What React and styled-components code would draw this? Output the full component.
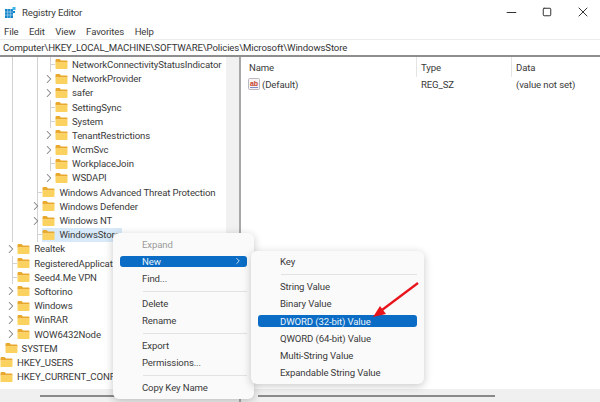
import React from 'react';
import styled, { createGlobalStyle } from 'styled-components';
import { ChevronRight, Minus, Square, X } from 'lucide-react';

const GlobalStyle = createGlobalStyle`
  html, body {
    margin: 0;
    padding: 0;
    background: #fff;
  }
  body {
    font-family: Roboto, "Noto Sans", sans-serif;
    font-size: 9.6px;
    letter-spacing: -0.12px;
    color: #3a3a3a;
  }
`;

const Window = styled.div`
  position: relative;
  width: 600px;
  height: 402px;
  overflow: hidden;
  display: flex;
  flex-direction: column;
  background: #fff;
`;

const TitleBar = styled.div`
  height: 24px;
  display: flex;
  align-items: center;
  padding-left: 5px;
  flex: none;
`;

const Title = styled.span`
  margin-left: 6px;
  flex: 1;
`;

const WinControl = styled.div`
  width: 36px;
  display: flex;
  justify-content: center;
  color: #333;
  margin-right: ${p => (p.$last ? -1 : 0)}px;
`;

const MenuBar = styled.div`
  height: 15px;
  display: flex;
  align-items: center;
  padding-left: 4px;
  gap: 10.5px;
  flex: none;
`;

const AddressBar = styled.div`
  height: 18px;
  flex: none;
  line-height: 16px;
  padding-left: 3px;
  border-top: 1px solid #ececec;
  border-bottom: 2px solid #8e8e8e;
  box-sizing: border-box;
  color: #333;
  white-space: nowrap;
`;

const Panes = styled.div`
  flex: 1;
  display: flex;
  min-height: 0;
`;

const TreePane = styled.div`
  width: 241px;
  flex: none;
  display: flex;
  flex-direction: column;
  border-right: 2px solid #a8a8a8;
  box-sizing: border-box;
  overflow: hidden;
`;

const TreeBody = styled.div`
  flex: 1;
  display: flex;
  min-height: 0;
`;

const TreeList = styled.div`
  flex: 1;
  min-width: 0;
  overflow: hidden;
  padding-top: 0.4px;
`;

// tree lines are painted as background layers: one per spine, plus the stub
const lineLayers = (guides, stub) => {
  const layers = guides.map(x => ({ pos: `${x}px 0`, size: '1px 100%' }));
  if (stub !== undefined) layers.push({ pos: `${stub}px 50%`, size: '5px 1px' });
  return layers;
};

const Row = styled.div`
  height: 14.2px;
  display: flex;
  align-items: center;
  white-space: nowrap;
  padding-left: ${p => p.$level * 12.6 - 8}px;
  background-repeat: no-repeat;
  background-image: ${p =>
    p.$lines.map(() => 'linear-gradient(#d2d2d2, #d2d2d2)').join(', ') || 'none'};
  background-size: ${p => p.$lines.map(l => l.size).join(', ') || 'auto'};
  background-position: ${p => p.$lines.map(l => l.pos).join(', ') || '0 0'};
`;

const Twist = styled.span`
  width: 0;
  display: flex;
  justify-content: flex-end;
  color: #808080;
  transform: translateX(1px);

  svg {
    flex: none;
  }
`;

const Node = styled.div`
  display: flex;
  align-items: center;
  height: 100%;
  padding-right: 2px;
  background: ${p => (p.$selected ? '#d8eaf9' : 'transparent')};
`;

const FolderSvg = styled.svg`
  width: 13px;
  height: 12px;
  flex: none;
`;

const Label = styled.span`
  margin-left: 4px;
`;

const TreeScroll = styled.div`
  width: 13px;
  flex: none;
  background: #f1f1f1;
`;

const HScroll = styled.div`
  height: 13px;
  flex: none;
  background: #f0f0f0;
  display: flex;
  align-items: center;
  padding-left: ${p => p.$from}px;
  padding-right: ${p => p.$to}px;
`;

const HThumb = styled.div`
  flex: 1;
  height: 2px;
  background: #8a8a8a;
`;

const ValuePane = styled.div`
  flex: 1;
  min-width: 0;
  display: flex;
  flex-direction: column;
`;

const ValueTable = styled.div`
  flex: 1;
  min-height: 0;
`;

const Columns = styled.div`
  display: grid;
  grid-template-columns: 175px 95px 1fr;
  align-items: center;
  height: ${p => p.$height}px;
`;

const Cell = styled.div`
  display: flex;
  align-items: center;
  gap: 2px;
  height: 100%;
  padding-left: ${p => p.$pad}px;
  border-left: ${p => (p.$line ? '1px solid #e4e4e4' : 'none')};
`;

const Menu = styled.div`
  position: absolute;
  left: ${p => p.$x}px;
  top: ${p => p.$y}px;
  width: ${p => p.$w}px;
  box-sizing: border-box;
  padding: ${p => p.$padY}px 7px ${p => p.$padY}px 6.5px;
  background: #fafafa;
  border-radius: 6px;
  box-shadow: 0 2px 8px rgba(0, 0, 0, 0.22);
  display: flex;
  flex-direction: column;
`;

const Item = styled.div`
  height: ${p => (p.$active ? 11.5 : 17.3)}px;
  margin: ${p => (p.$active ? '2.9px 0' : '0')};
  display: flex;
  align-items: center;
  justify-content: space-between;
  padding: 0 4px 0 ${p => p.$pad}px;
  border-radius: 3px;
  background: ${p => (p.$active ? '#0a6cc4' : 'transparent')};
  color: ${p => (p.$active ? '#e9f3fc' : p.$muted ? '#9a9a9a' : '#3a3a3a')};
`;

const Sep = styled.div`
  height: 1px;
  margin: 3.5px 0 3px 23px;
  background: #e2e2e2;
`;

const Arrow = styled.svg`
  position: absolute;
  left: 368px;
  top: 278px;
  width: 54px;
  height: 44px;
`;

const Folder = () => (
  <FolderSvg viewBox="0 0 13 12">
    <path d="M0.5 2.2 Q0.5 1 1.6 1 H4.6 L6 2.6 H11.6 Q12.5 2.6 12.5 3.5 V4.5 H0.5 Z" fill="#e9a92e" />
    <path d="M0.5 4.2 H12.5 V10.2 Q12.5 11 11.6 11 H1.4 Q0.5 11 0.5 10.2 Z" fill="#fbd25f" />
  </FolderSvg>
);

const RegIcon = () => (
  <svg width="12" height="12" viewBox="0 0 12 12">
    <rect x="0.5" y="0.5" width="11" height="11" rx="1" fill="#fbf3f1" stroke="#b9b9c4" />
    <text x="6" y="8" fontSize="7" fontWeight="700" textAnchor="middle" fill="#c2402e" fontFamily="Liberation Sans">ab</text>
    <rect x="2" y="9" width="8" height="1" fill="#7d8cc4" />
  </svg>
);

const AppIcon = () => (
  <svg width="11" height="11" viewBox="0 0 11 11">
    <rect x="0" y="2" width="8" height="9" fill="#1583c9" />
    <path d="M2.7 2V11M5.3 2V11M0 5H8M0 8H8" stroke="#bfe3f5" strokeWidth="0.6" />
    <rect x="7.5" y="0" width="3" height="3" fill="#3fb4e8" />
    <rect x="8" y="4" width="2" height="2" fill="#1583c9" />
  </svg>
);

const rows = [
  { name: 'NetworkConnectivityStatusIndicator', level: 5 },
  { name: 'NetworkProvider', level: 5, open: true },
  { name: 'safer', level: 5, open: true },
  { name: 'SettingSync', level: 5 },
  { name: 'System', level: 5 },
  { name: 'TenantRestrictions', level: 5, open: true },
  { name: 'WcmSvc', level: 5, open: true },
  { name: 'WorkplaceJoin', level: 5 },
  { name: 'WSDAPI', level: 5, open: true },
  { name: 'Windows Advanced Threat Protection', level: 4 },
  { name: 'Windows Defender', level: 4, open: true },
  { name: 'Windows NT', level: 4, open: true },
  { name: 'WindowsStore', level: 4, selected: true },
  { name: 'Realtek', level: 2, open: true },
  { name: 'RegisteredApplications', level: 2 },
  { name: 'Seed4.Me VPN', level: 2 },
  { name: 'Softorino', level: 2, open: true },
  { name: 'Windows', level: 2, open: true },
  { name: 'WinRAR', level: 2, open: true },
  { name: 'WOW6432Node', level: 2, open: true },
  { name: 'SYSTEM', level: 1 },
  { name: 'HKEY_USERS', level: 0 },
  { name: 'HKEY_CURRENT_CONFIG', level: 0 }
];

// spine x per level, and the stub that joins it to a folder without a chevron
const linesFor = row => {
  if (row.level === 5) {
    return row.open ? lineLayers([12, 37]) : lineLayers([12, 37, 50], 50);
  }
  if (row.level === 4) {
    return row.open ? lineLayers([12, 37]) : lineLayers([12, 37], 37);
  }
  if (row.level === 2) {
    return row.open ? [] : lineLayers([12], 12);
  }
  return [];
};

const keyMenu = [
  { label: 'Expand', muted: true },
  { label: 'New', active: true, chevron: true },
  { label: 'Find...' },
  'sep',
  { label: 'Delete' },
  { label: 'Rename' },
  'sep',
  { label: 'Export' },
  { label: 'Permissions...' },
  'sep',
  { label: 'Copy Key Name' }
];

const newMenu = [
  { label: 'Key' },
  'sep',
  { label: 'String Value' },
  { label: 'Binary Value' },
  { label: 'DWORD (32-bit) Value', active: true },
  { label: 'QWORD (64-bit) Value' },
  { label: 'Multi-String Value' },
  { label: 'Expandable String Value' }
];

const renderItems = items =>
  items.map((item, i) =>
    item === 'sep' ? (
      <Sep key={i} />
    ) : (
      <Item key={i} $pad={22.5} $active={item.active} $muted={item.muted}>
        {item.label}
        {item.chevron && <ChevronRight size={10} strokeWidth={2} />}
      </Item>
    )
  );

export default function App() {
  return (
    <Window>
      <GlobalStyle />
      <TitleBar>
        <AppIcon />
        <Title>Registry Editor</Title>
        <WinControl><Minus size={15} strokeWidth={1.6} /></WinControl>
        <WinControl><Square size={10} strokeWidth={2.4} /></WinControl>
        <WinControl $last><X size={16} strokeWidth={1.5} /></WinControl>
      </TitleBar>
      <MenuBar>
        <span>File</span>
        <span>Edit</span>
        <span>View</span>
        <span>Favorites</span>
        <span>Help</span>
      </MenuBar>
      <AddressBar>Computer\HKEY_LOCAL_MACHINE\SOFTWARE\Policies\Microsoft\WindowsStore</AddressBar>
      <Panes>
        <TreePane>
          <TreeBody>
            <TreeList>
              {rows.map(row => (
                <Row key={row.name} $level={row.level} $lines={linesFor(row)}>
                  {row.open && <Twist><ChevronRight size={14} strokeWidth={1.8} /></Twist>}
                  <Node $selected={row.selected}>
                    <Folder />
                    <Label>{row.name}</Label>
                  </Node>
                </Row>
              ))}
            </TreeList>
            <TreeScroll />
          </TreeBody>
          <HScroll $from={40} $to={14}><HThumb /></HScroll>
        </TreePane>
        <ValuePane>
          <ValueTable>
            <Columns $height={20}>
              <Cell $pad={8}>Name</Cell>
              <Cell $pad={4} $line>Type</Cell>
              <Cell $pad={4} $line>Data</Cell>
            </Columns>
            <Columns $height={14}>
              <Cell $pad={7}><RegIcon />(Default)</Cell>
              <Cell $pad={5}>REG_SZ</Cell>
              <Cell $pad={5}>(value not set)</Cell>
            </Columns>
          </ValueTable>
          <HScroll $from={17} $to={105}><HThumb /></HScroll>
        </ValuePane>
      </Panes>
      <Menu $x={113} $y={233} $w={141} $padY={2.5}>{renderItems(keyMenu)}</Menu>
      <Menu $x={251} $y={251} $w={173} $padY={2}>{renderItems(newMenu)}</Menu>
      <Arrow viewBox="0 0 54 44">
        <path d="M50 5 L14 32" stroke="#e8141c" strokeWidth="2.2" fill="none" />
        <path d="M5 39 L12 28 L18 36 Z" fill="#e8141c" />
      </Arrow>
    </Window>
  );
}
